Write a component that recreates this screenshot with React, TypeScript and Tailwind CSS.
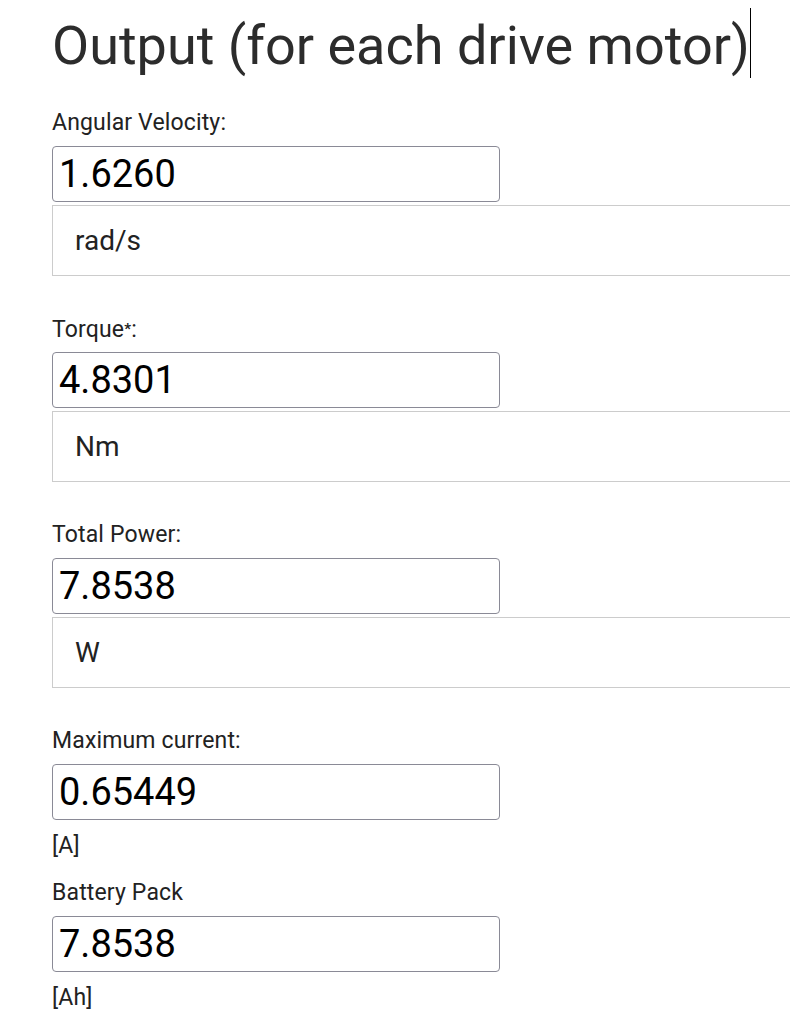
import React from "react";

const font = { fontFamily: "Roboto, 'Noto Sans', sans-serif" };

function Field({ label, value, unit, boxed }: { label: React.ReactNode; value: string; unit: string; boxed: boolean }) {
  return (
    <div className="flex flex-col">
      <div className="text-[23px] leading-[26px] text-[#222] tracking-[0.15px] h-[26px]">{label}</div>
      <div className="mt-[10px] w-[448px] h-[56px] border border-[#8a8a96] rounded-[4px] flex items-center pl-[6px] text-[38px] text-black bg-white">
        {value}
      </div>
      {boxed ? (
        <div className="mt-[3px] w-[800px] h-[71px] border border-[#cccccc] flex items-center pl-[22px] text-[28px] text-[#222] shrink-0">
          {unit}
        </div>
      ) : (
        <div className="mt-[12px] text-[23px] leading-[28px] text-[#222] tracking-[0.15px]">{unit}</div>
      )}
    </div>
  );
}

export default function App() {
  return (
    <div className="w-[790px] h-[1023px] overflow-hidden bg-white" style={font}>
      <div className="pl-[52px] pt-[8px]">
        <div className="flex items-center h-[70px]">
          <span className="text-[54px] leading-[70px] text-[#2c2c2c] relative top-[3px]">Output (for each drive motor)</span>
          <span className="w-[1px] h-[70px] bg-black" />
        </div>
        <div className="mt-[32px] flex flex-col">
          <Field label="Angular Velocity:" value="1.6260" unit="rad/s" boxed />
          <div className="h-[40px]" />
          <Field label={<>Torque<span className="text-[15px] align-[3px] font-bold">*</span>:</>} value="4.8301" unit="Nm" boxed />
          <div className="h-[40px]" />
          <Field label="Total Power:" value="7.8538" unit="W" boxed />
          <div className="h-[40px]" />
          <Field label="Maximum current:" value="0.65449" unit="[A]" boxed={false} />
          <div className="h-[20px]" />
          <Field label="Battery Pack" value="7.8538" unit="[Ah]" boxed={false} />
        </div>
      </div>
    </div>
  );
}
